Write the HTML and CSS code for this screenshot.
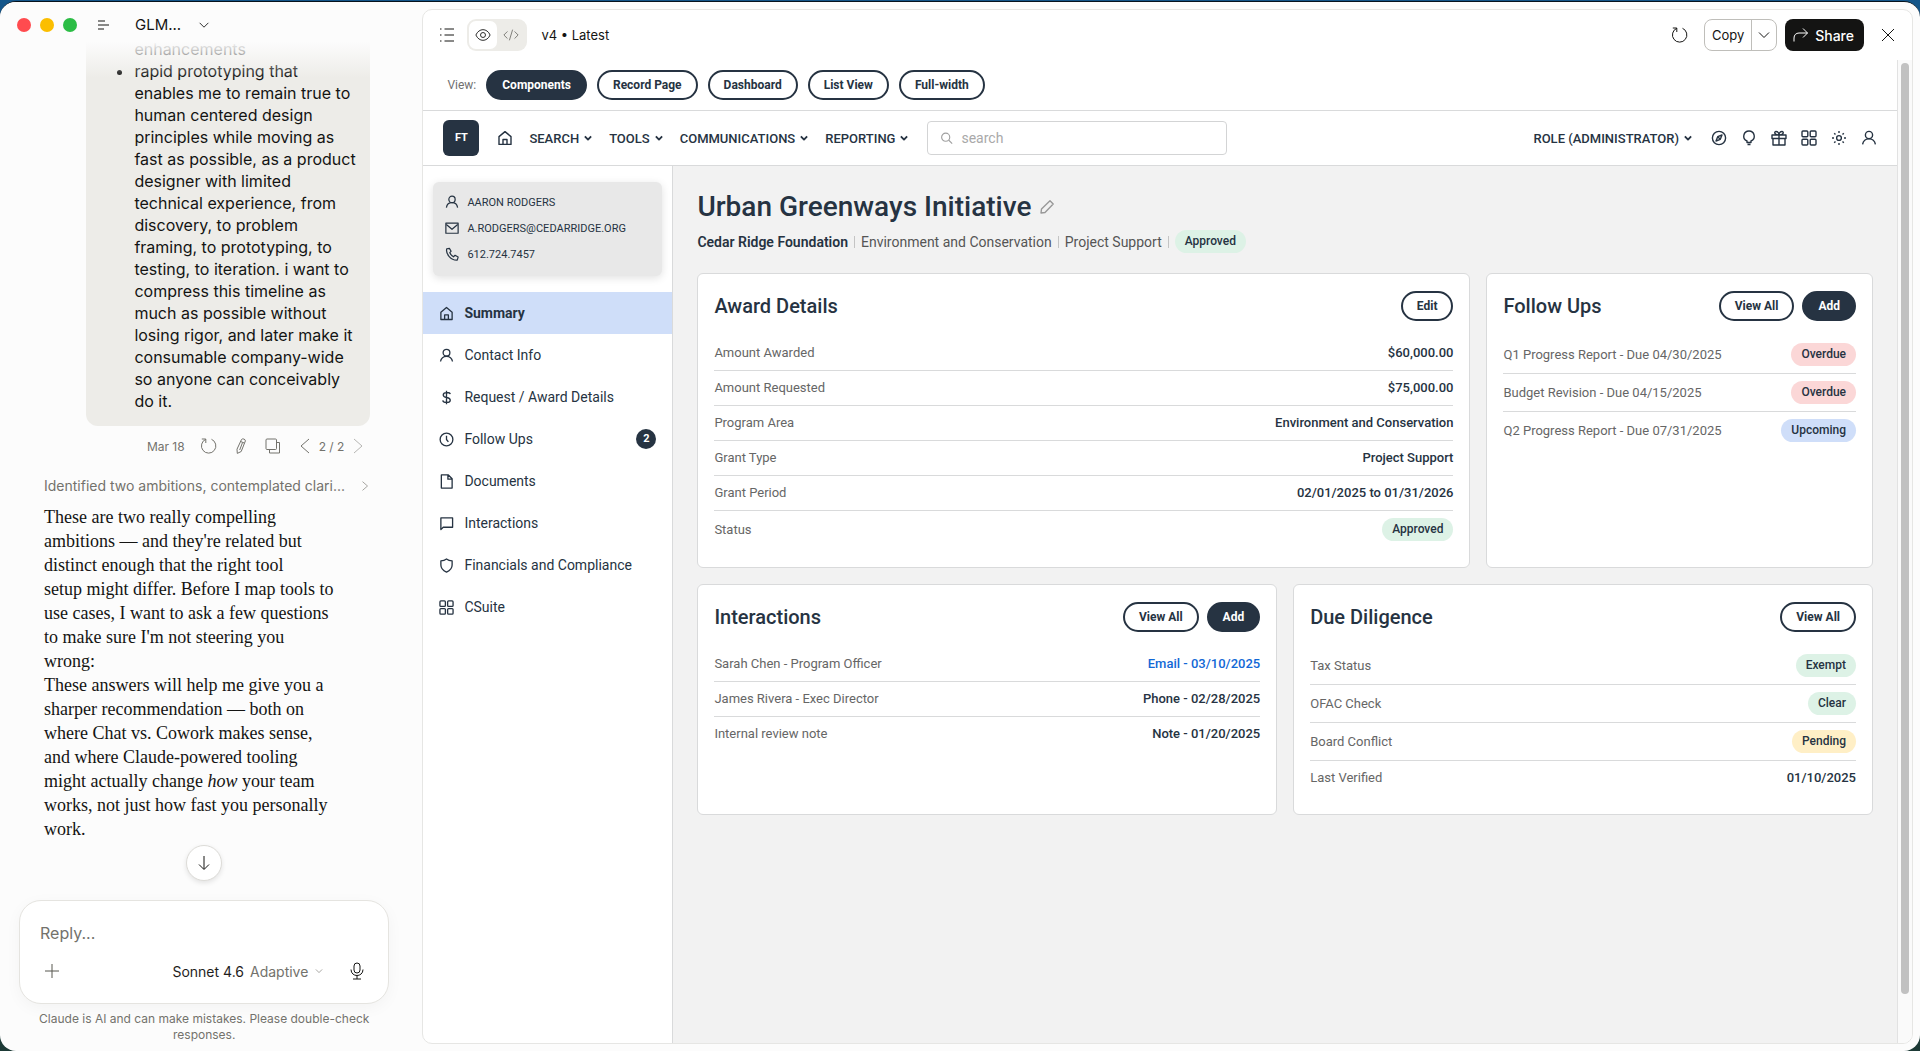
FILE: index.html
```html
<!DOCTYPE html>
<html lang="en">
<head>
    <meta charset="UTF-8">
    <meta name="viewport" content="width=device-width, initial-scale=1.0">
    <title>Urban Greenways Initiative</title>
    <link rel="stylesheet" href="styles.css">
</head>
<body>
    <!-- shared icons -->
    <svg class="sprite" aria-hidden="true">
        <symbol id="i-down" viewBox="0 0 16 16"><path d="M3 5.5l5 5 5-5"/></symbol>
        <symbol id="i-left" viewBox="0 0 16 16"><path d="M12 1L4 8l8 7"/></symbol>
        <symbol id="i-right" viewBox="0 0 16 16"><path d="M4 1l8 7-8 7"/></symbol>
        <symbol id="i-reload" viewBox="0 0 16 16"><path d="M.8 1h4v4M4.8 1.3A7.2 7.2 0 1 0 10.5 1.3"/></symbol>
        <symbol id="i-home" viewBox="0 0 16 16"><path d="M2 6.6L8 1.6l6 5V14.4H2zM6 14.4V9.5h4v4.9"/></symbol>
        <symbol id="i-user" viewBox="0 0 16 16"><circle cx="8" cy="5" r="3.6"/><path d="M1.6 14.4c.5-3.2 3.2-5.6 6.4-5.6s5.9 2.4 6.4 5.6"/></symbol>
        <symbol id="i-grid" viewBox="0 0 16 16"><rect x="1" y="1" width="5.8" height="5.8" rx="1"/><rect x="9.2" y="1" width="5.8" height="5.8" rx="1"/><rect x="1" y="9.2" width="5.8" height="5.8" rx="1"/><rect x="9.2" y="9.2" width="5.8" height="5.8" rx="1"/></symbol>
    </svg>

    <div class="window">
        <section class="chat">
            <header class="chat-header">
                <div class="lights"><i class="red"></i><i class="yellow"></i><i class="green"></i></div>
                <button class="icon-btn menu-btn" aria-label="Menu"><svg class="icon" viewBox="0 0 16 16"><path d="M3 4h7M3 8h11M3 12h6"/></svg></button>
                <button class="chat-title">GLM... <svg class="icon"><use href="#i-down"/></svg></button>
            </header>

            <div class="thread">
                <div class="bubble">
                    <ul>
                        <li class="cut">enhancements</li>
                        <li>rapid prototyping that<br>enables me to remain true to<br>human centered design<br>principles while moving as<br>fast as possible, as a product<br>designer with limited<br>technical experience, from<br>discovery, to problem<br>framing, to prototyping, to<br>testing, to iteration. i want to<br>compress this timeline as<br>much as possible without<br>losing rigor, and later make it<br>consumable company-wide<br>so anyone can conceivably<br>do it.</li>
                    </ul>
                </div>
                <div class="actions">
                    <span>Mar 18</span>
                    <button class="icon-btn" aria-label="Retry"><svg class="icon"><use href="#i-reload"/></svg></button>
                    <button class="icon-btn" aria-label="Edit message"><svg class="icon" viewBox="0 0 16 16"><path d="M8.5 1.5c1-1.300 4-.4 3.900 1.400L8.200 13.500 4.300 15.400 4 11.200zM7.600 3.500l3.600 1.500M9.500 4.600L6.700 12"/></svg></button>
                    <button class="icon-btn" aria-label="Copy message"><svg class="icon" viewBox="0 0 16 16"><rect x="1" y="1" width="10.5" height="10.5" rx="1"/><path d="M11.5 4.500h3V15H4.500v-3.500"/></svg></button>
                    <div class="pager">
                        <button class="icon-btn" aria-label="Previous version"><svg class="icon"><use href="#i-left"/></svg></button>
                        <span>2 / 2</span>
                        <button class="icon-btn faint" aria-label="Next version"><svg class="icon"><use href="#i-right"/></svg></button>
                    </div>
                </div>
                <button class="thought"><span>Identified two ambitions, contemplated clari...</span><svg class="icon"><use href="#i-right"/></svg></button>
                <div class="answer">
                    <p>These are two really compelling<br>ambitions — and they're related but<br>distinct enough that the right tool<br>setup might differ. Before I map tools to<br>use cases, I want to ask a few questions<br>to make sure I'm not steering you<br>wrong:</p>
                    <p>These answers will help me give you a<br>sharper recommendation — both on<br>where Chat vs. Cowork makes sense,<br>and where Claude-powered tooling<br>might actually change <em>how</em> your team<br>works, not just how fast you personally<br>work.</p>
                </div>
                <button class="to-bottom" aria-label="Scroll to bottom"><svg class="icon" viewBox="0 0 16 16"><path d="M8 1v13M3 9.5l5 5 5-5"/></svg></button>
            </div>

            <form class="composer">
                <input type="text" placeholder="Reply..." aria-label="Reply">
                <div class="composer-bar">
                    <button type="button" class="icon-btn" aria-label="Add"><svg class="icon" viewBox="0 0 16 16"><path d="M8 1v14M1 8h14"/></svg></button>
                    <button type="button" class="model">Sonnet 4.6 <span>Adaptive</span><svg class="icon"><use href="#i-down"/></svg></button>
                    <button type="button" class="icon-btn mic" aria-label="Dictate"><svg class="icon" viewBox="0 0 18 18"><rect x="6" y="1" width="6" height="10" rx="3"/><path d="M3 7.5c0 8 12 8 12 0M9 13.5V17M5 17h8"/></svg></button>
                </div>
            </form>
            <p class="disclaimer">Claude is AI and can make mistakes. Please double-check responses.</p>
        </section>

        <section class="panel">
            <header class="toolbar">
                <button class="icon-btn" aria-label="Contents"><svg class="icon" viewBox="0 0 16 16"><path d="M5.5 2H15M5.5 8H15M5.5 14H15M1 2h1.500M1 8h1.500M1 14h1.500"/></svg></button>
                <div class="toggle">
                    <button class="active" aria-label="Preview"><svg class="icon" viewBox="0 0 18 18"><path d="M1 9c3.500-8 12.500-8 16 0-3.500 8-12.500 8-16 0z"/><circle cx="9" cy="9" r="2.8"/></svg></button>
                    <button aria-label="Code"><svg class="icon" viewBox="0 0 18 18"><path d="M5 5L1 9l4 4M13 5l4 4-4 4M10.8 3L7.2 15"/></svg></button>
                </div>
                <span class="version">v4 • Latest</span>
                <button class="icon-btn reload" aria-label="Reload"><svg class="icon"><use href="#i-reload"/></svg></button>
                <div class="copy">
                    <button>Copy</button>
                    <button aria-label="Copy options"><svg class="icon"><use href="#i-down"/></svg></button>
                </div>
                <button class="share"><svg class="icon" viewBox="0 0 16 16"><path d="M1 14.5V11C1 8 3 6 6 6h8.500M10 1.500L14.500 6 10 10.500"/></svg>Share</button>
                <button class="icon-btn" aria-label="Close"><svg class="icon" viewBox="0 0 16 16"><path d="M2 2l12 12M14 2L2 14"/></svg></button>
            </header>

            <div class="artifact">
                <div class="app">
                    <div class="views">
                        <span>View:</span>
                        <button class="pill dark">Components</button>
                        <button class="pill">Record Page</button>
                        <button class="pill">Dashboard</button>
                        <button class="pill">List View</button>
                        <button class="pill">Full-width</button>
                    </div>

                    <header class="topnav">
                        <div class="logo">FT</div>
                        <nav class="menu">
                            <a href="#" aria-label="Home"><svg class="icon"><use href="#i-home"/></svg></a>
                            <button>SEARCH<svg class="icon caret"><use href="#i-down"/></svg></button>
                            <button>TOOLS<svg class="icon caret"><use href="#i-down"/></svg></button>
                            <button>COMMUNICATIONS<svg class="icon caret"><use href="#i-down"/></svg></button>
                            <button>REPORTING<svg class="icon caret"><use href="#i-down"/></svg></button>
                        </nav>
                        <label class="search">
                            <svg class="icon" viewBox="0 0 16 16"><circle cx="7" cy="7" r="5"/><path d="M10.8 10.8L15 15"/></svg>
                            <input type="text" placeholder="search" aria-label="Search">
                        </label>
                        <div class="tools">
                            <button>ROLE (ADMINISTRATOR)<svg class="icon caret"><use href="#i-down"/></svg></button>
                            <button aria-label="Explore"><svg class="icon" viewBox="0 0 16 16"><circle cx="8" cy="8" r="6.6"/><path d="M11 5L9.300 9.300 5 11l1.700-4.300zM6.700 6.700l2.600 2.600"/></svg></button>
                            <button aria-label="Ideas"><svg class="icon" viewBox="0 0 16 16"><path d="M6 11C.5 8.500 2.500 1 8 1s7.500 7.500 2 10v1.500H6zM6.500 14.500h3"/></svg></button>
                            <button aria-label="Gifts"><svg class="icon" viewBox="0 0 16 16"><path d="M1 5h14v3.500H1zM2 8.500h12V15H2zM8 5v10M8 5C3 5 3 1.500 5 1.500S8 3.500 8 5c0-1.500 1-3.500 3-3.500S13 5 8 5"/></svg></button>
                            <button aria-label="Apps"><svg class="icon"><use href="#i-grid"/></svg></button>
                            <button aria-label="Settings"><svg class="icon" viewBox="0 0 16 16"><circle cx="8" cy="8" r="2.4"/><path d="M8 1v2M8 13v2M1 8h2M13 8h2M3.200 3.200l1.300 1.300M11.500 11.500l1.300 1.300M3.200 12.800l1.300-1.300M11.500 4.500l1.300-1.300"/></svg></button>
                            <button aria-label="Account"><svg class="icon"><use href="#i-user"/></svg></button>
                        </div>
                    </header>

                    <div class="body">
                        <aside class="sidebar">
                            <address class="contact">
                                <span><svg class="icon"><use href="#i-user"/></svg>AARON RODGERS</span>
                                <span><svg class="icon" viewBox="0 0 16 16"><rect x="1" y="2.5" width="14" height="11.5"/><path d="M1.5 4L8 9.500 14.500 4"/></svg>A.RODGERS@CEDARRIDGE.ORG</span>
                                <span><svg class="icon" viewBox="0 0 16 16"><path d="M5 1.500L2 2c-1.500 6 5 13.500 12 13l1-3.500-3.500-2-1.800 1.700C7.500 10 6.500 8.500 5.500 6.500L7 4.800z"/></svg>612.724.7457</span>
                            </address>
                            <nav class="side-nav">
                                <a class="active" href="#"><svg class="icon"><use href="#i-home"/></svg>Summary</a>
                                <a href="#"><svg class="icon"><use href="#i-user"/></svg>Contact Info</a>
                                <a href="#"><svg class="icon" viewBox="0 0 16 16"><path d="M8 .8v14.400M12 4.500C11.500 2 4.500 2 4.500 5.200c0 3.800 7.500 1.800 7.500 5.600 0 3.200-7.500 3.200-8 .2"/></svg>Request / Award Details</a>
                                <a href="#"><svg class="icon" viewBox="0 0 16 16"><circle cx="8" cy="8" r="6.8"/><path d="M8 4v4l2 2.500"/></svg>Follow Ups<span class="count">2</span></a>
                                <a href="#"><svg class="icon" viewBox="0 0 16 16"><path d="M2.5 1h7.500l4 4v10H2.500zM9.500 1v4.500H14"/></svg>Documents</a>
                                <a href="#"><svg class="icon" viewBox="0 0 16 16"><path d="M2 2h12.500v10H4.500L2 14.500z"/></svg>Interactions</a>
                                <a href="#"><svg class="icon" viewBox="0 0 16 16"><path d="M8 1c2 1.500 4 1.900 6 2v4.500c0 4-2.500 6-6 7.500-3.500-1.500-6-3.500-6-7.500V3c2-.1 4-.5 6-2z"/></svg>Financials and Compliance</a>
                                <a href="#"><svg class="icon"><use href="#i-grid"/></svg>CSuite</a>
                            </nav>
                        </aside>

                        <main class="main">
                            <div class="title">
                                <h1>Urban Greenways Initiative</h1>
                                <button class="icon-btn" aria-label="Rename"><svg class="icon" viewBox="0 0 16 16"><path d="M2 14l.5-4L11 1.800 14.200 5 6 13.500z"/></svg></button>
                            </div>
                            <div class="meta">
                                <strong>Cedar Ridge Foundation</strong><i></i>
                                <span>Environment and Conservation</span><i></i>
                                <span>Project Support</span><i></i>
                                <span class="badge green">Approved</span>
                            </div>

                            <div class="cards two-one">
                                <section class="card">
                                    <div class="card-head"><h2>Award Details</h2><button class="pill">Edit</button></div>
                                    <dl>
                                        <div><dt>Amount Awarded</dt><dd>$60,000.00</dd></div>
                                        <div><dt>Amount Requested</dt><dd>$75,000.00</dd></div>
                                        <div><dt>Program Area</dt><dd>Environment and Conservation</dd></div>
                                        <div><dt>Grant Type</dt><dd>Project Support</dd></div>
                                        <div><dt>Grant Period</dt><dd>02/01/2025 to 01/31/2026</dd></div>
                                        <div><dt>Status</dt><dd class="badge green">Approved</dd></div>
                                    </dl>
                                </section>
                                <section class="card">
                                    <div class="card-head"><h2>Follow Ups</h2><button class="pill">View All</button><button class="pill dark">Add</button></div>
                                    <dl>
                                        <div><dt>Q1 Progress Report - Due 04/30/2025</dt><dd class="badge red">Overdue</dd></div>
                                        <div><dt>Budget Revision - Due 04/15/2025</dt><dd class="badge red">Overdue</dd></div>
                                        <div><dt>Q2 Progress Report - Due 07/31/2025</dt><dd class="badge blue">Upcoming</dd></div>
                                    </dl>
                                </section>
                            </div>
                            <div class="cards">
                                <section class="card">
                                    <div class="card-head"><h2>Interactions</h2><button class="pill">View All</button><button class="pill dark">Add</button></div>
                                    <dl>
                                        <div><dt>Sarah Chen - Program Officer</dt><dd><a href="#">Email - 03/10/2025</a></dd></div>
                                        <div><dt>James Rivera - Exec Director</dt><dd>Phone - 02/28/2025</dd></div>
                                        <div><dt>Internal review note</dt><dd>Note - 01/20/2025</dd></div>
                                    </dl>
                                </section>
                                <section class="card">
                                    <div class="card-head"><h2>Due Diligence</h2><button class="pill">View All</button></div>
                                    <dl>
                                        <div><dt>Tax Status</dt><dd class="badge green">Exempt</dd></div>
                                        <div><dt>OFAC Check</dt><dd class="badge green">Clear</dd></div>
                                        <div><dt>Board Conflict</dt><dd class="badge yellow">Pending</dd></div>
                                        <div><dt>Last Verified</dt><dd>01/10/2025</dd></div>
                                    </dl>
                                </section>
                            </div>
                        </main>
                    </div>
                </div>
                <div class="scrollbar"><div class="thumb"></div></div>
            </div>
        </section>
    </div>
</body>
</html>
```

FILE: styles.css
```css
* {
    box-sizing: border-box;
    margin: 0;
    padding: 0;
}
body {
    height: 100vh;
    padding-top: 1px;
    overflow: hidden;
    background: linear-gradient(#14568a, #1d3a36);
    font-family: Inter, "Liberation Sans", sans-serif;
    color: #141413;
}
button, input {
    font: inherit;
    color: inherit;
    border: none;
    background: none;
}
button {
    cursor: pointer;
}
a {
    color: inherit;
    text-decoration: none;
}
.sprite {
    display: none;
}
.icon {
    width: 16px;
    height: 16px;
    flex: none;
    display: block;
    fill: none;
    stroke: currentColor;
    stroke-width: 1;
    stroke-linejoin: round;
}
.icon-btn {
    display: flex;
    align-items: center;
    justify-content: center;
}
.window {
    display: flex;
    height: 100%;
    border-top: 1px solid #06131d;
    border-radius: 16px;
    overflow: hidden;
    background: #fcfcfc;
}

/* chat column */
.chat {
    position: relative;
    width: 22%;
    flex: none;
    display: flex;
    flex-direction: column;
    padding: 0 33px 8px 19px;
}
.chat-header {
    position: absolute;
    z-index: 1;
    top: 0;
    left: 0;
    right: 0;
    height: 76px;
    padding: 13px 17px;
    display: flex;
    align-items: flex-start;
    background: linear-gradient(#fcfcfc 52%, rgba(252, 252, 252, 0));
}
.lights {
    display: flex;
    gap: 9px;
    padding-top: 3px;
}
.lights i {
    width: 14px;
    height: 14px;
    border-radius: 50%;
}
.lights .red {
    background: #ff4b4f;
}
.lights .yellow {
    background: #fbbe00;
}
.lights .green {
    background: #2bbd45;
}
.menu-btn {
    margin: 2px 24px 0 18px;
}
.chat-title {
    display: flex;
    align-items: center;
    gap: 16px;
    font-size: 15px;
    line-height: 20px;
}
.chat-title .icon {
    width: 14px;
}
.thread {
    position: relative;
    flex: 1;
    min-height: 0;
    overflow: hidden;
    display: flex;
    flex-direction: column;
    justify-content: flex-end;
    padding: 0 19px 59px 25px;
}
.bubble {
    width: 284px;
    align-self: flex-end;
    padding: 12px 16px 14px;
    border-radius: 12px;
    background: #edece8;
    font-size: 16px;
    line-height: 22px;
    white-space: nowrap;
}
.bubble ul {
    padding-left: 32px;
}
.bubble .cut {
    list-style: none;
}
.actions {
    display: flex;
    align-items: center;
    justify-content: flex-end;
    gap: 16px;
    height: 40px;
    padding-right: 4px;
    font-size: 12px;
    color: #73726c;
}
.pager {
    display: flex;
    align-items: center;
    gap: 6px;
}
.faint {
    opacity: .5;
}
.thought {
    display: flex;
    align-items: center;
    justify-content: space-between;
    height: 39px;
    font-size: 14px;
    white-space: nowrap;
    color: #73726c;
}
.thought .icon {
    width: 10px;
    height: 10px;
}
.answer {
    font-family: "Liberation Serif", serif;
    font-size: 18px;
    line-height: 24px;
    white-space: nowrap;
}
.to-bottom {
    position: absolute;
    bottom: 19px;
    left: 50%;
    width: 36px;
    height: 36px;
    margin-left: -18px;
    display: flex;
    align-items: center;
    justify-content: center;
    border: 1px solid #dddcd8;
    border-radius: 50%;
    background: #fff;
    box-shadow: 0 2px 5px rgba(0, 0, 0, .1);
}
.composer {
    height: 104px;
    padding: 20px 20px 16px;
    border: 1px solid #e5e4e0;
    border-radius: 22px;
    background: #fff;
    box-shadow: 0 4px 16px rgba(0, 0, 0, .04);
}
.composer input {
    width: 100%;
    height: 24px;
    font-size: 16px;
    outline: none;
}
.composer input::placeholder {
    color: #73726c;
}
.composer-bar {
    display: flex;
    align-items: center;
    gap: 24px;
    padding: 17px 2px 0 4px;
    color: #57564f;
}
.model {
    margin-left: auto;
    display: flex;
    align-items: center;
    gap: 6px;
    font-size: 14px;
    color: #1f1e1d;
}
.model span, .model .icon {
    color: #73726c;
}
.model .icon {
    width: 10px;
}
.mic {
    color: #141413;
}
.mic .icon {
    width: 18px;
    height: 18px;
}
.disclaimer {
    padding: 7px 16px 0;
    font-size: 12px;
    line-height: 16px;
    text-align: center;
    color: #73726c;
}

/* preview panel */
.panel {
    flex: 1;
    min-width: 0;
    display: flex;
    flex-direction: column;
    margin: 7px 7px 7px 0;
    border: 1px solid #e6e6e4;
    border-radius: 10px;
    overflow: hidden;
    background: #fff;
}
.toolbar {
    display: flex;
    align-items: center;
    height: 50px;
    padding: 0 16px;
    font-size: 13px;
}
.toggle {
    display: flex;
    margin: 0 14px 0 12px;
    padding: 2px;
    border-radius: 9px;
    background: #edece8;
}
.toggle button {
    width: 28px;
    height: 28px;
    display: flex;
    align-items: center;
    justify-content: center;
    border-radius: 7px;
    color: #73726c;
}
.toggle .active {
    background: #fff;
    color: #141413;
}
.reload {
    margin: 0 16px 0 auto;
}
.copy {
    display: flex;
    height: 32px;
    border: 1px solid #bfbeba;
    border-radius: 8px;
}
.copy button {
    padding: 0 7px;
}
.copy button + button {
    padding: 0 4px;
    border-left: 1px solid #bfbeba;
}
.share {
    display: flex;
    align-items: center;
    gap: 6px;
    height: 32px;
    margin: 0 16px 0 8px;
    padding: 0 10px 0 8px;
    border-radius: 8px;
    background: #141413;
    color: #fff;
    font-size: 14px;
    font-weight: 500;
}
.artifact {
    flex: 1;
    min-height: 0;
    display: flex;
}
.scrollbar {
    width: 15px;
    padding: 3px 3px 0;
    border-left: 1px solid #e2e2e2;
    background: #fafafa;
}
.thumb {
    width: 8px;
    height: 95%;
    border-radius: 4px;
    background: #c1c1c1;
}

/* grant app */
.app {
    flex: 1;
    min-width: 0;
    display: flex;
    flex-direction: column;
    font-family: Roboto, sans-serif;
    font-size: 13px;
    color: #263342;
}
.app .icon {
    stroke-width: 1.4;
}
.views {
    display: flex;
    align-items: center;
    gap: 10px;
    height: 51px;
    padding: 0 24px;
    border-bottom: 1px solid #d9dadb;
    font-size: 12px;
    color: #707070;
}
.pill {
    height: 30px;
    padding: 0 14px;
    border: 2px solid #263342;
    border-radius: 15px;
    background: #fff;
    color: #263342;
    font-size: 12px;
    font-weight: 700;
}
.pill.dark {
    background: #263342;
    color: #fff;
}
.topnav {
    display: flex;
    align-items: center;
    height: 55px;
    padding: 0 20px;
    border-bottom: 1px solid #d9dadb;
    font-weight: 500;
}
.logo {
    width: 36px;
    height: 36px;
    border-radius: 6px;
    background: #263342;
    color: #fff;
    font-size: 11px;
    font-weight: 700;
    line-height: 36px;
    text-align: center;
}
.menu {
    display: flex;
    align-items: center;
    gap: 16px;
    margin: 0 18px;
}
.menu button, .tools button {
    display: flex;
    align-items: center;
    gap: 4px;
}
.app .caret {
    width: 10px;
    height: 10px;
    stroke-width: 3;
}
.search {
    display: flex;
    align-items: center;
    gap: 8px;
    width: 300px;
    height: 34px;
    padding: 0 12px;
    border: 1px solid #d3d4d5;
    border-radius: 4px;
    color: #a0a0a0;
}
.search .icon {
    width: 13px;
}
.search input {
    width: 100%;
    font-size: 14px;
    font-weight: 400;
    outline: none;
}
.search input::placeholder {
    color: #a9a9a9;
}
.tools {
    display: flex;
    gap: 14px;
    margin-left: auto;
}
.tools button:first-child {
    margin-right: 4px;
}
.body {
    flex: 1;
    display: flex;
}
.sidebar {
    width: 250px;
    flex: none;
    border-right: 1px solid #d9dadb;
}
.contact {
    margin: 16px 10px;
    padding: 7px 12px 9px;
    border-radius: 6px;
    background: #e8e8e8;
    box-shadow: 0 2px 8px rgba(0, 0, 0, .12);
    font-size: 11px;
    font-style: normal;
}
.contact span {
    display: flex;
    align-items: center;
    gap: 8px;
    height: 26px;
}
.contact .icon {
    width: 14px;
    height: 14px;
}
.side-nav a {
    display: flex;
    align-items: center;
    gap: 10px;
    height: 42px;
    padding: 0 16px;
    font-size: 14px;
}
.side-nav .icon {
    width: 15px;
    height: 15px;
}
.side-nav .active {
    background: #cfdef9;
    font-weight: 700;
}
.count {
    width: 20px;
    height: 20px;
    margin-left: auto;
    border-radius: 50%;
    background: #263342;
    color: #fff;
    font-size: 11px;
    font-weight: 700;
    line-height: 20px;
    text-align: center;
}
.main {
    flex: 1;
    padding: 23px 24px;
    background: #f2f2f2;
}
.title {
    display: flex;
    align-items: center;
    gap: 8px;
    color: #999;
}
h1 {
    color: #263342;
    font-size: 28px;
    font-weight: 500;
    line-height: 36px;
}
.meta {
    display: flex;
    align-items: center;
    gap: 6px;
    margin: 5px 0 20px;
    font-size: 14px;
    color: #555;
}
.meta strong {
    color: #263342;
    font-weight: 600;
}
.meta i {
    width: 1px;
    height: 12px;
    background: #c4c4c4;
}
.badge {
    padding: 0 10px;
    border-radius: 12px;
    color: #263342;
    font-size: 12px;
    font-weight: 500;
    line-height: 23px;
}
.badge.green {
    background: #ddf2e6;
}
.badge.red {
    background: #fbd7d7;
}
.badge.blue {
    background: #cfdef9;
}
.badge.yellow {
    background: #ffefc6;
}
.cards {
    display: grid;
    grid-template-columns: 1fr 1fr;
    gap: 16px;
    margin-bottom: 16px;
}
.cards.two-one {
    grid-template-columns: 2fr 1fr;
}
.card {
    padding: 17px 16px 19px;
    border: 1px solid #d9dadb;
    border-radius: 6px;
    background: #fff;
}
.card-head {
    display: flex;
    align-items: center;
    gap: 8px;
    margin-bottom: 15px;
}
h2 {
    margin-right: auto;
    font-size: 20px;
    font-weight: 500;
}
dl > div {
    display: flex;
    align-items: center;
    justify-content: space-between;
    padding: 7px 0;
    border-bottom: 1px solid #d9dadb;
    line-height: 20px;
}
dl > div:last-child {
    border-bottom: none;
}
dt {
    color: #666;
}
dd {
    font-weight: 500;
}
dd a {
    color: #1268d6;
}
```
